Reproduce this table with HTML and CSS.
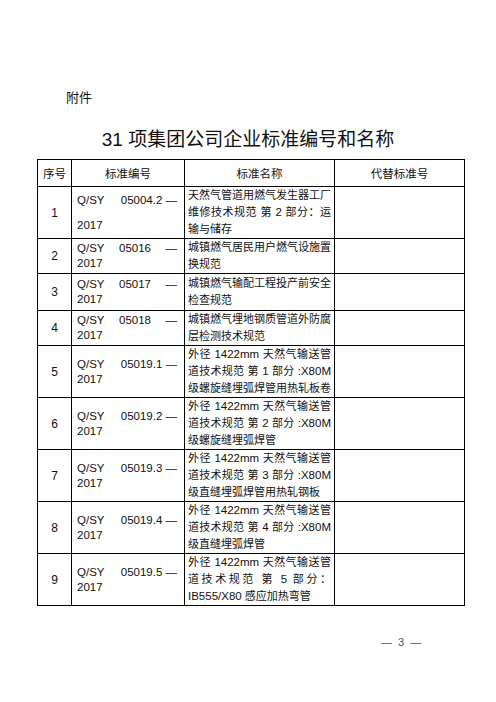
FILE: index.html
```
<!DOCTYPE html>
<html lang="zh">
<head>
<meta charset="utf-8">
<title>31 项集团公司企业标准编号和名称</title>
<link rel="stylesheet" href="styles.css">
</head>
<body>
<div class="page">
  <div class="attach">附件</div>
  <h1 class="title">31 项集团公司企业标准编号和名称</h1>
  <table class="std">
    <colgroup>
      <col class="c1"><col class="c2"><col class="c3"><col class="c4">
    </colgroup>
    <tr class="hd">
      <th>序号</th><th>标准编号</th><th>标准名称</th><th>代替标准号</th>
    </tr>
    <tr class="r51">
      <td class="no">1</td>
      <td class="code tall"><div class="l1"><span>Q/SY</span><span>05004.2 —</span></div><div>2017</div></td>
      <td class="name"><div class="j">天然气管道用燃气发生器工厂</div><div class="j">维修技术规范 第 <span class="lat">2</span> 部分：运</div><div>输与储存</div></td>
      <td></td>
    </tr>
    <tr class="r34">
      <td class="no">2</td>
      <td class="code"><div class="l1"><span>Q/SY</span><span>05016</span><span>—</span></div><div>2017</div></td>
      <td class="name"><div class="j">城镇燃气居民用户燃气设施置</div><div>换规范</div></td>
      <td></td>
    </tr>
    <tr class="r37">
      <td class="no">3</td>
      <td class="code"><div class="l1"><span>Q/SY</span><span>05017</span><span>—</span></div><div>2017</div></td>
      <td class="name"><div class="j">城镇燃气输配工程投产前安全</div><div>检查规范</div></td>
      <td></td>
    </tr>
    <tr class="r35">
      <td class="no">4</td>
      <td class="code"><div class="l1"><span>Q/SY</span><span>05018</span><span>—</span></div><div>2017</div></td>
      <td class="name"><div class="j">城镇燃气埋地钢质管道外防腐</div><div>层检测技术规范</div></td>
      <td></td>
    </tr>
    <tr class="r51">
      <td class="no">5</td>
      <td class="code"><div class="l1"><span>Q/SY</span><span>05019.1 —</span></div><div>2017</div></td>
      <td class="name"><div class="j">外径 <span class="lat">1422mm</span> 天然气输送管</div><div class="j">道技术规范 第 <span class="lat">1</span> 部分 <span class="lat">:X80M</span></div><div>级螺旋缝埋弧焊管用热轧板卷</div></td>
      <td></td>
    </tr>
    <tr class="r52">
      <td class="no">6</td>
      <td class="code"><div class="l1"><span>Q/SY</span><span>05019.2 —</span></div><div>2017</div></td>
      <td class="name"><div class="j">外径 <span class="lat">1422mm</span> 天然气输送管</div><div class="j">道技术规范 第 <span class="lat">2</span> 部分 <span class="lat">:X80M</span></div><div>级螺旋缝埋弧焊管</div></td>
      <td></td>
    </tr>
    <tr class="r50">
      <td class="no">7</td>
      <td class="code"><div class="l1"><span>Q/SY</span><span>05019.3 —</span></div><div>2017</div></td>
      <td class="name"><div class="j">外径 <span class="lat">1422mm</span> 天然气输送管</div><div class="j">道技术规范 第 <span class="lat">3</span> 部分 <span class="lat">:X80M</span></div><div>级直缝埋弧焊管用热轧钢板</div></td>
      <td></td>
    </tr>
    <tr class="r51">
      <td class="no">8</td>
      <td class="code"><div class="l1"><span>Q/SY</span><span>05019.4 —</span></div><div>2017</div></td>
      <td class="name"><div class="j">外径 <span class="lat">1422mm</span> 天然气输送管</div><div class="j">道技术规范 第 <span class="lat">4</span> 部分 <span class="lat">:X80M</span></div><div>级直缝埋弧焊管</div></td>
      <td></td>
    </tr>
    <tr class="r50">
      <td class="no">9</td>
      <td class="code"><div class="l1"><span>Q/SY</span><span>05019.5 —</span></div><div>2017</div></td>
      <td class="name"><div class="j">外径 <span class="lat">1422mm</span> 天然气输送管</div><div class="j">道技术规范 第 <span class="lat">5</span> 部分：</div><div><span class="lat">IB555/X80</span> 感应加热弯管</div></td>
      <td></td>
    </tr>
  </table>
  <div class="pageno">— 3 —</div>
</div>
</body>
</html>
```
FILE: styles.css
```
html, body {
  margin: 0;
  padding: 0;
  background: #fff;
}
body {
  font-family: "Liberation Sans", "Noto Sans CJK SC", sans-serif;
  color: #111;
}
.page {
  width: 496px;
  padding-top: 89px;
}
.attach {
  margin-left: 66px;
  font-size: 13px;
  line-height: 18px;
}
.title {
  margin: 21px 0 0 0;
  text-align: center;
  font-size: 19px;
  line-height: 24px;
  font-weight: normal;
}
.std {
  margin: 7px 0 0 37px;
  width: 427px;
  border-collapse: collapse;
  table-layout: fixed;
  font-size: 11px;
}
.c1 { width: 34px; }
.c2 { width: 113px; }
.c3 { width: 150px; }
.c4 { width: 130px; }
.std th, .std td {
  border: 1px solid #000;
  padding: 0;
  vertical-align: middle;
}
.std th {
  font-weight: normal;
  font-size: 11.5px;
  text-align: center;
}
.hd { height: 27px; }
.r51 { height: 51px; }
.r34 { height: 34px; }
.r37 { height: 37px; }
.r35 { height: 35px; }
.r52 { height: 52px; }
.r50 { height: 50px; }
.no {
  text-align: center;
  font-size: 12px;
}
.code {
  padding: 0 7px 0 5px !important;
  font-size: 11.5px;
  line-height: 15px;
  white-space: nowrap;
}
.code.tall { line-height: 25px; }
.l1 {
  display: flex;
  justify-content: space-between;
}
.name {
  padding: 0 3px !important;
  line-height: 17px;
  white-space: nowrap;
}
.lat { font-size: 11.5px; }
.j {
  text-align: justify;
  text-align-last: justify;
}
.pageno {
  margin: 29px 0 0 381px;
  font-size: 11px;
  line-height: 14px;
  color: #555;
  word-spacing: 3px;
}
```
